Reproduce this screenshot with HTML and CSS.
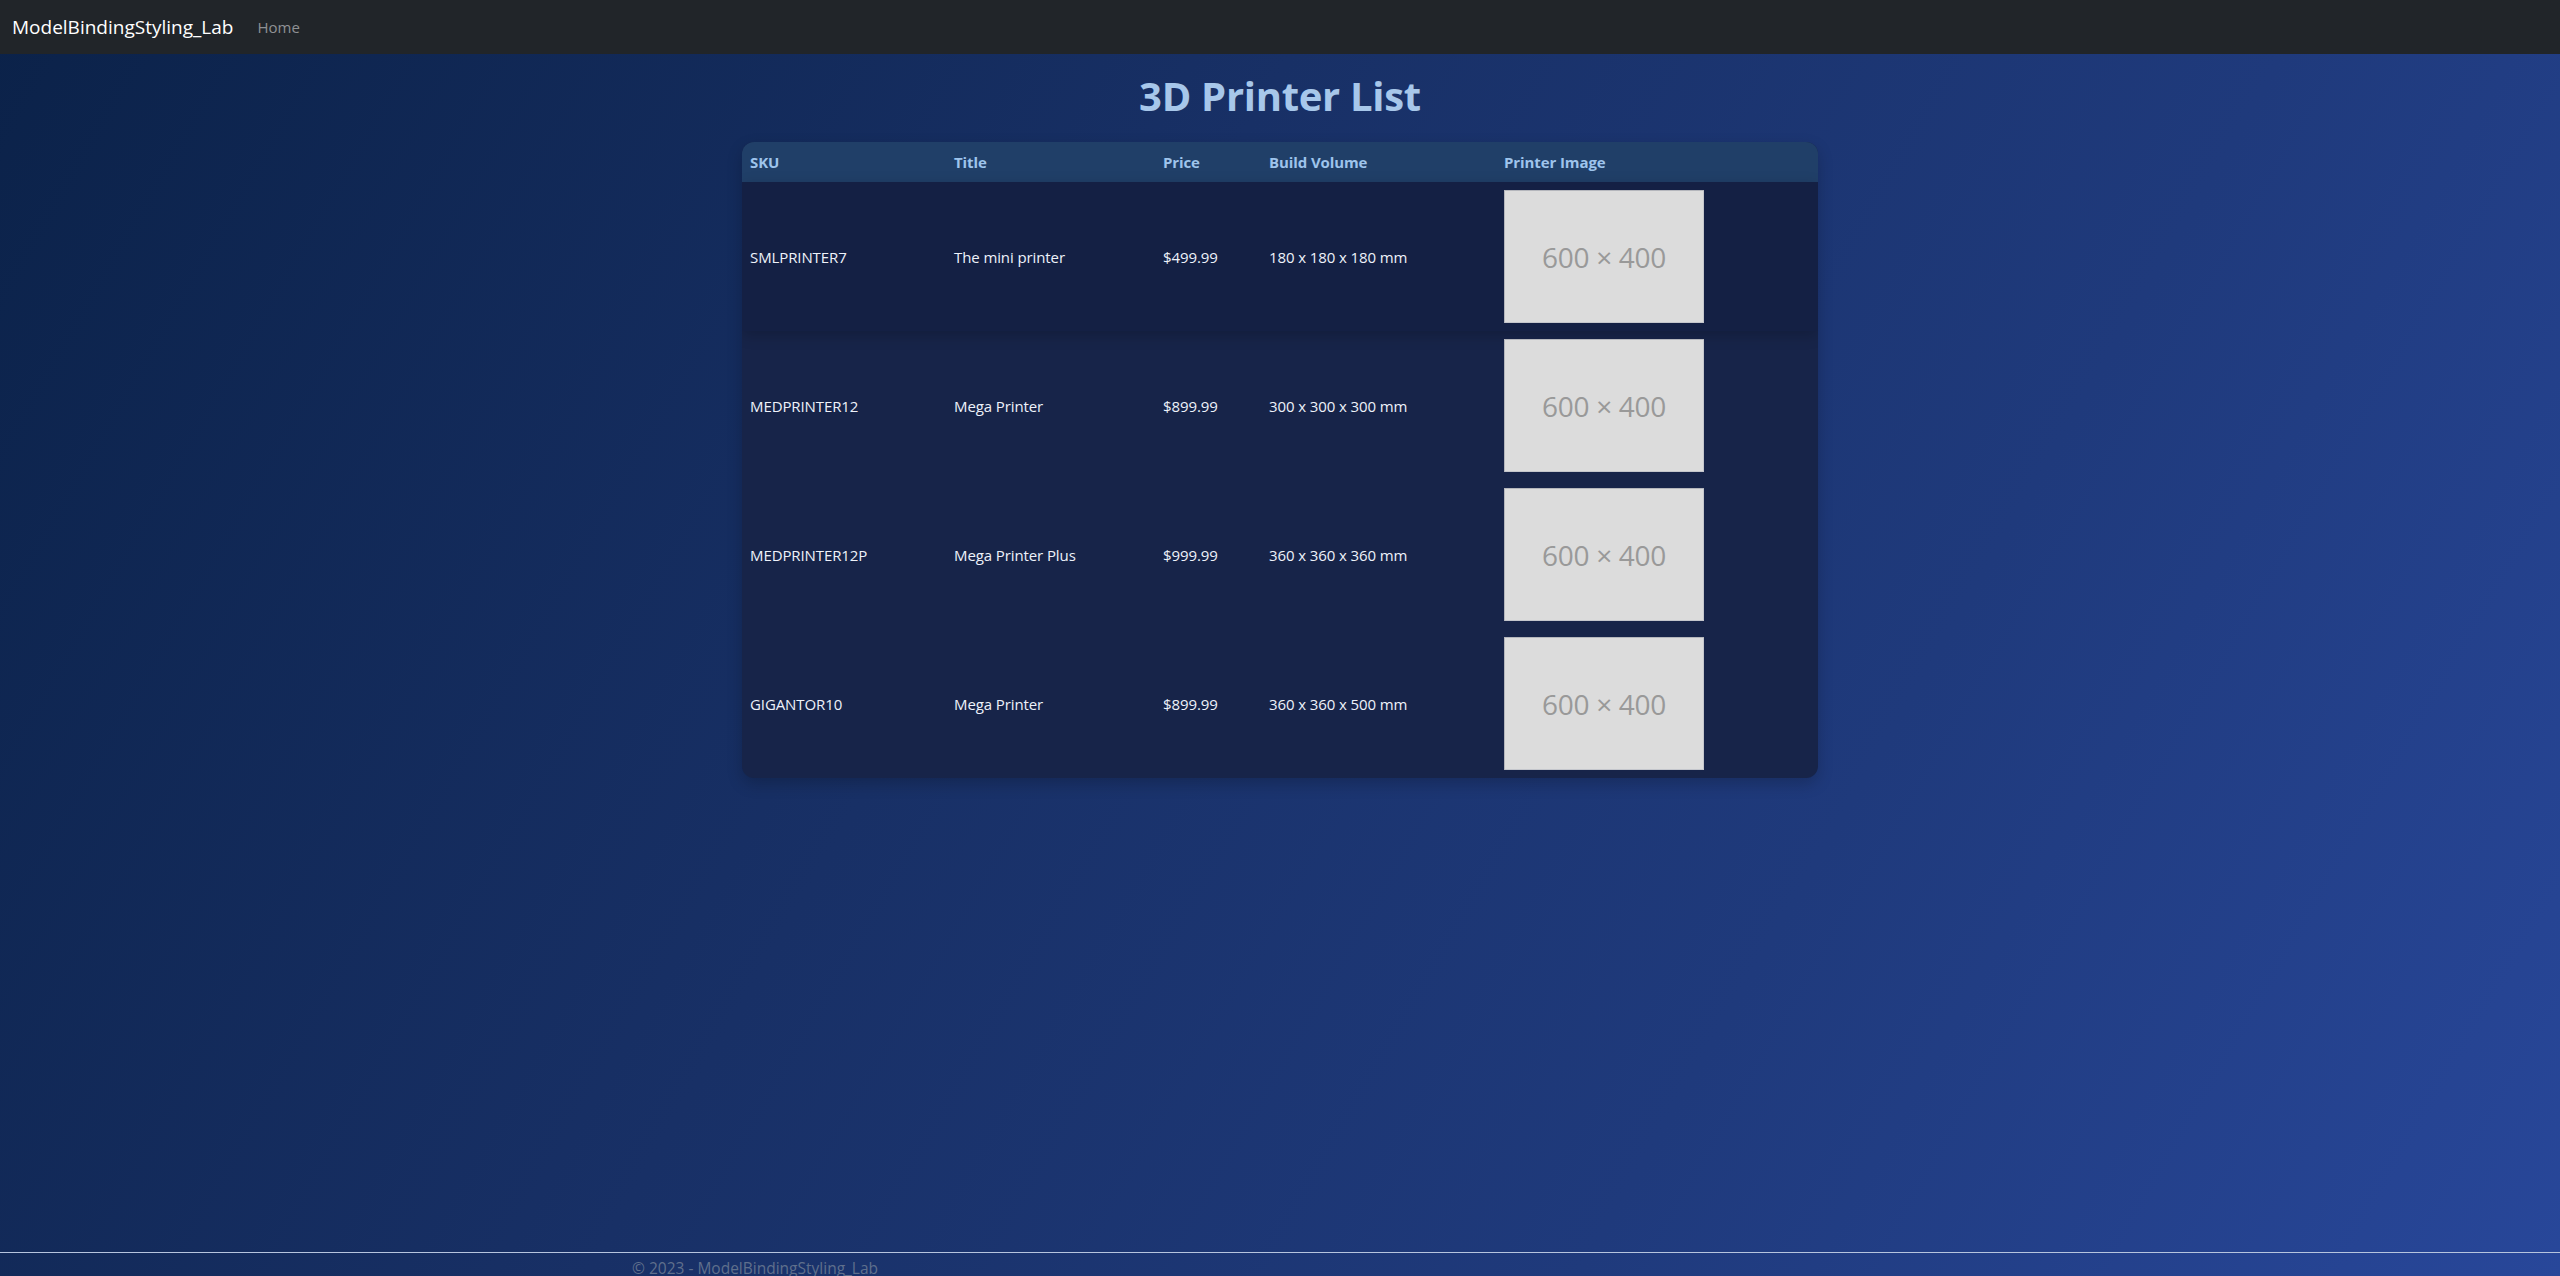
FILE: index.html
```html
<!DOCTYPE html>
<html lang="en">
<head>
<meta charset="utf-8">
<title>3D Printer List - ModelBindingStyling_Lab</title>
<link rel="stylesheet" href="styles.css">
</head>
<body>
<header class="navbar">
  <a class="brand" href="#">ModelBindingStyling_Lab</a>
  <a class="nav-link" href="#">Home</a>
</header>
<main class="main">
  <h1 class="page-title">3D Printer List</h1>
  <table class="printer-table">
    <thead>
      <tr>
        <th class="col-sku">SKU</th>
        <th class="col-title">Title</th>
        <th class="col-price">Price</th>
        <th class="col-volume">Build Volume</th>
        <th class="col-image">Printer Image</th>
      </tr>
    </thead>
    <tbody>
      <tr class="row-hover">
        <td>SMLPRINTER7</td>
        <td>The mini printer</td>
        <td>$499.99</td>
        <td>180 x 180 x 180 mm</td>
        <td><div class="placeholder">600 × 400</div></td>
      </tr>
      <tr>
        <td>MEDPRINTER12</td>
        <td>Mega Printer</td>
        <td>$899.99</td>
        <td>300 x 300 x 300 mm</td>
        <td><div class="placeholder">600 × 400</div></td>
      </tr>
      <tr>
        <td>MEDPRINTER12P</td>
        <td>Mega Printer Plus</td>
        <td>$999.99</td>
        <td>360 x 360 x 360 mm</td>
        <td><div class="placeholder">600 × 400</div></td>
      </tr>
      <tr>
        <td>GIGANTOR10</td>
        <td>Mega Printer</td>
        <td>$899.99</td>
        <td>360 x 360 x 500 mm</td>
        <td><div class="placeholder">600 × 400</div></td>
      </tr>
    </tbody>
  </table>
</main>
<footer class="footer">
  <div class="footer-inner">© 2023 - ModelBindingStyling_Lab</div>
</footer>
</body>
</html>
```
FILE: styles.css
```css
html {
  min-height: 100%;
}
body {
  margin: 0;
  font-family: "Open Sans", "Noto Sans", sans-serif;
  font-size: 15px;
  color: #e9eef8;
  background: linear-gradient(120deg, #0b2249 0%, #183066 40%, #1f3a7c 70%, #28479a 100%);
  display: flex;
  flex-direction: column;
}
.navbar {
  height: 54px;
  background: #212529;
  display: flex;
  align-items: center;
  padding: 0 12px;
  box-sizing: border-box;
}
.brand {
  color: #fff;
  font-size: 19px;
  text-decoration: none;
  margin-right: 16px;
}
.nav-link {
  color: #8f9194;
  font-size: 15px;
  text-decoration: none;
  padding: 0 8px;
}
.main {
  min-height: 1198px;
  box-sizing: border-box;
  display: flex;
  flex-direction: column;
  align-items: center;
  padding-top: 18px;
}
.page-title {
  margin: 0 0 22px;
  font-size: 40px;
  line-height: 48px;
  font-weight: 700;
  color: #a7c7ea;
  letter-spacing: -0.3px;
}
.printer-table {
  width: 1076px;
  border-collapse: separate;
  border-spacing: 0;
  border-radius: 12px;
  overflow: hidden;
  background: #172449;
  box-shadow: 0 6px 16px rgba(0, 0, 0, 0.2);
  table-layout: fixed;
}
.printer-table th {
  height: 40px;
  padding: 0 8px;
  text-align: left;
  font-weight: 700;
  color: #9ec4ec;
  background: #203f68;
  font-size: 15px;
  letter-spacing: -0.1px;
}
.col-sku { width: 188px; }
.col-title { width: 193px; }
.col-price { width: 90px; }
.col-volume { width: 219px; }
.col-image { width: auto; }
.printer-table td {
  padding: 8px;
  vertical-align: middle;
  color: #eef2fa;
  letter-spacing: -0.1px;
  white-space: nowrap;
}
.row-hover td {
  background: #142044;
}
.row-hover {
  box-shadow: 0 4px 14px rgba(0, 0, 0, 0.2);
}
.placeholder {
  width: 200px;
  height: 133px;
  background: #dcdcdc;
  color: #999;
  font-size: 28px;
  display: flex;
  align-items: center;
  justify-content: center;
  box-shadow: inset 1px 1px 0 #b4b6bc, inset -1px -1px 0 #c4c6cc;
  letter-spacing: -0.3px;
}
.footer {
  border-top: 1px solid #b6c4de;
  height: 40px;
}
.footer-inner {
  width: 1320px;
  margin: 0 auto;
  padding: 0 12px;
  box-sizing: border-box;
  line-height: 30px;
  color: #5f6f8c;
  font-size: 15.5px;
}
```
